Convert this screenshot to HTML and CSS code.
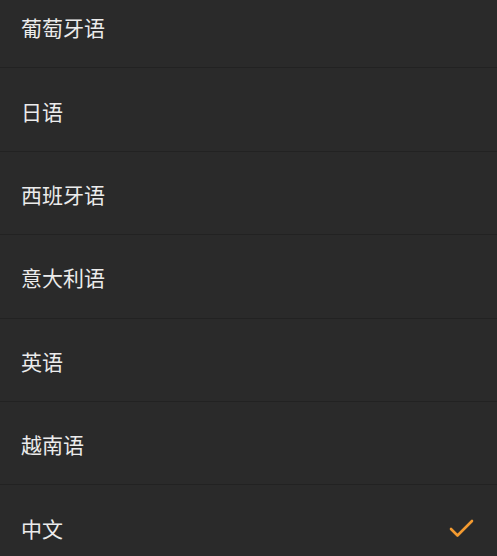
FILE: index.html
```html
<!DOCTYPE html>
<html lang="zh-CN">
<head>
    <meta charset="UTF-8">
    <meta name="viewport" content="width=device-width, initial-scale=1.0">
    <title>语言</title>
    <link rel="stylesheet" href="styles.css">
</head>
<body>

    <ul class="lista">
        <li class="item">葡萄牙语</li>
        <li class="item">日语</li>
        <li class="item">西班牙语</li>
        <li class="item">意大利语</li>
        <li class="item">英语</li>
        <li class="item">越南语</li>
        <li class="item ativo">
            中文
            <!-- marca do idioma selecionado -->
            <svg class="check" width="26" height="22" viewBox="0 0 26 22">
                <path d="M2 11 L8.5 17.5 L23 3" fill="none" stroke="#f39a30" stroke-width="2.6" stroke-linecap="round" stroke-linejoin="round"/>
            </svg>
        </li>
    </ul>

</body>
</html>
```
FILE: styles.css
```css
html, body { margin: 0; padding: 0; background: #2a2a2a; }
body { font-family: "Noto Sans CJK SC", "Noto Sans", sans-serif; color: #ececec; overflow: hidden; height: 556px; }
.lista { list-style: none; margin: -15px 0 0 0; padding: 0; }
.item { box-sizing: border-box; height: 83.4px; display: flex; align-items: center; justify-content: space-between; padding: 2px 22px 0 21px; font-size: 21px; border-bottom: 1px solid #222222; }
.check { display: block; margin-top: 2px; }
```
